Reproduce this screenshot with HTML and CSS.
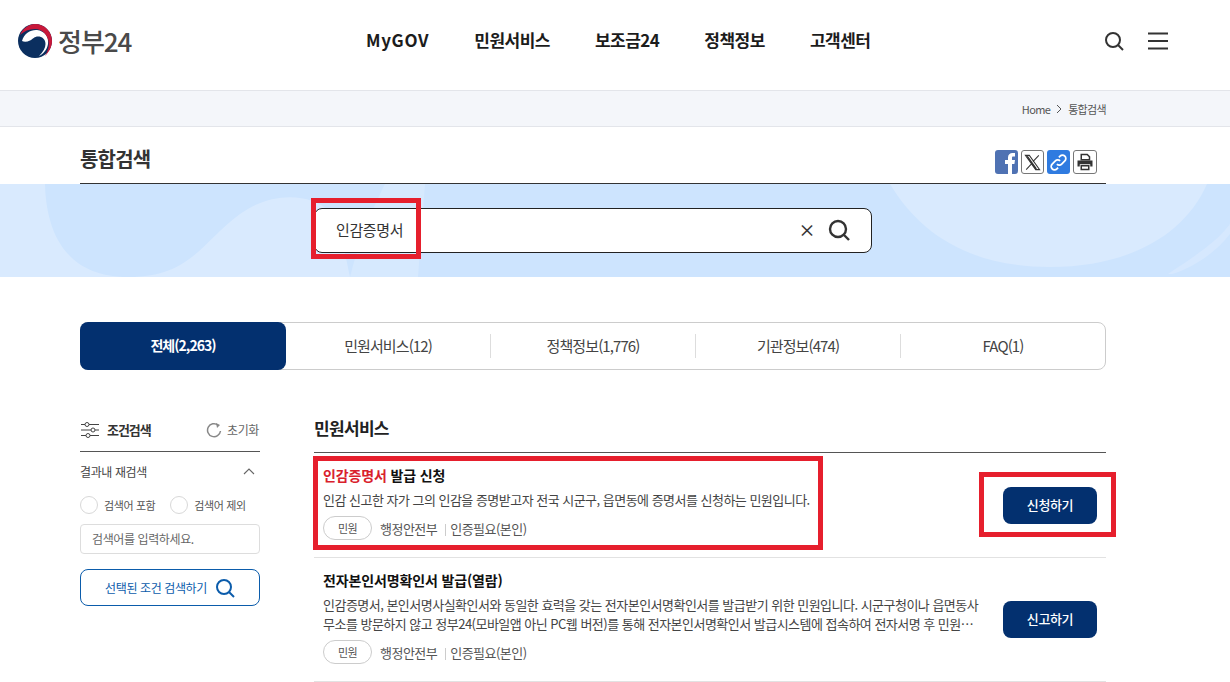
FILE: index.html
```html
<!DOCTYPE html>
<html lang="ko">
<head>
<meta charset="utf-8">
<title>통합검색 | 정부24</title>
<link rel="stylesheet" href="styles.css">
</head>
<body>
<header class="site-header">
  <a class="logo">
    <svg class="logo-mark" viewBox="0 0 36 36" width="36" height="36">
      <circle cx="18" cy="18" r="17" fill="#0b2f5f"/>
      <path d="M5 18C7 10 14 6.500 20 7C28 8 32 14 31 21C30 27 26 31 22 33C26 29 28.500 25 28.500 21C28.500 16 25 13.500 21 13.500C17.500 13.500 16 16 13 17.500C10 19 7 19 5 18Z" fill="#fff"/>
      <path d="M3 12C6 5 12 1 18 1C28 1 35 9 35 18C35 24 32 29 28 33C31 28 32.500 23 31.500 18C30 11 25 6 18 6C12 6 7 8 3 12Z" fill="#c8183a"/>
    </svg>
    <span class="logo-text">정부24</span>
  </a>
  <nav class="main-nav">
    <a class="nav-latin">MyGOV</a><a>민원서비스</a><a>보조금24</a><a>정책정보</a><a>고객센터</a>
  </nav>
  <div class="header-tools">
    <svg viewBox="0 0 20 20" width="20" height="20"><circle cx="9" cy="9" r="7" class="stroke-dark"/><path d="M14 14l5 5" class="stroke-dark"/></svg>
    <svg viewBox="0 0 20 18" width="20" height="18"><path d="M0 1.500h20M0 9h20M0 16.500h20" class="stroke-dark"/></svg>
  </div>
</header>
<div class="breadcrumb">
  <div class="container crumbs">
    <span>Home</span>
    <svg viewBox="0 0 6 10" width="6" height="10"><path d="M1 1l4 4-4 4" fill="none" stroke="#555" stroke-width="1"/></svg>
    <span>통합검색</span>
  </div>
</div>
<div class="container title-row">
  <h1>통합검색</h1>
  <div class="share">
    <span class="share-btn fb"><svg viewBox="0 0 23 24" width="23" height="24"><path d="M13 24V14h-3v-4h3V7.500C13 4.500 15 3 17.500 3H20v3.500h-1.800C17 6.500 17 7.200 17 8v2h3l-.6 4H17v10z" fill="#fff"/></svg></span>
    <span class="share-btn outline"><svg viewBox="0 0 24 24" width="19" height="19"><path d="M3 3h5l13 18h-5zM20 3l-7.500 8M11 13.500L4 21M5.500 4L17 20" fill="none" stroke="#333" stroke-width="1.300"/></svg></span>
    <span class="share-btn link"><svg viewBox="0 0 24 24" width="19" height="19"><path d="M10 14a4 4 0 0 0 6 0l4-4a4 4 0 0 0-6-6l-1.500 1.500M14 10a4 4 0 0 0-6 0l-4 4a4 4 0 0 0 6 6l1.500-1.500" fill="none" stroke="#fff" stroke-width="2.200"/></svg></span>
    <span class="share-btn outline"><svg viewBox="0 0 24 24" width="18" height="18"><path d="M7 2h8l3 3v4H7z" fill="none" stroke="#333" stroke-width="2"/><path d="M2 10h20v8h-3v-3H5v3H2z" fill="#333"/><path d="M7 17h10v5H7z" fill="none" stroke="#333" stroke-width="2"/></svg></span>
  </div>
</div>
<section class="search-band">
  <svg class="band-art" viewBox="0 0 1230 93" preserveAspectRatio="none">
    <path d="M0 0H45C46 40 60 93 128 93H350C345 70 340 40 330 28C310 8 270 8 240 30C200 60 190 93 128 93H0Z" fill="#d9eafe"/>
    <path d="M385 0H425L418 93H350C358 60 372 25 385 0Z" fill="#d6e9fe"/>
    <path d="M890 0C920 50 970 83 1050 83C1130 83 1185 50 1207 0Z" fill="#d9eafe"/>
    <path d="M1168 90C1190 75 1215 60 1230 40V50C1215 70 1190 85 1172 90Z" fill="#d6e8fe"/>
  </svg>
  <div class="search-box">
    <span class="search-value">인감증명서</span>
    <span class="search-clear">×</span>
    <svg viewBox="0 0 24 24" width="24" height="24"><circle cx="11" cy="11" r="8" class="stroke-dark wide"/><path d="M17 17l5 5" class="stroke-dark wide"/></svg>
  </div>
  <span class="mark mark-search"></span>
</section>
<div class="container">
  <div class="tabs">
    <a class="tab active">전체(2,263)</a>
    <a class="tab">민원서비스(12)</a>
    <a class="tab sep">정책정보(1,776)</a>
    <a class="tab sep">기관정보(474)</a>
    <a class="tab sep">FAQ(1)</a>
  </div>
  <div class="columns">
    <aside class="filters">
      <div class="filter-head">
        <svg viewBox="0 0 18 16" width="18" height="16"><path d="M0 2.500h18M0 8h18M0 13.500h18" stroke="#444" stroke-width="1.200"/><circle cx="6" cy="2.500" r="2" fill="#fff" stroke="#444"/><circle cx="12" cy="8" r="2" fill="#fff" stroke="#444"/><circle cx="7" cy="13.500" r="2" fill="#fff" stroke="#444"/></svg>
        <strong>조건검색</strong>
        <span class="reset">
          <svg viewBox="0 0 16 16" width="16" height="16"><path d="M14.500 9A6.500 6.500 0 1 1 12 3" fill="none" stroke="#888" stroke-width="1.500"/><path d="M10 1l4 2-3 3z" fill="#888"/></svg>
          초기화
        </span>
      </div>
      <div class="filter-sub">
        <span>결과내 재검색</span>
        <svg viewBox="0 0 12 7" width="12" height="7"><path d="M1 6l5-5 5 5" fill="none" stroke="#666" stroke-width="1.100"/></svg>
      </div>
      <div class="radios">
        <label class="radio"><i></i>검색어 포함</label>
        <label class="radio"><i></i>검색어 제외</label>
      </div>
      <div class="filter-input">검색어를 입력하세요.</div>
      <a class="filter-submit">선택된 조건 검색하기
        <svg viewBox="0 0 20 20" width="20" height="20"><circle cx="9" cy="9" r="7" fill="none" stroke="#0b5cab" stroke-width="2"/><path d="M14 14l5 5" stroke="#0b5cab" stroke-width="2"/></svg>
      </a>
    </aside>
    <main class="results">
      <h2>민원서비스</h2>
      <article class="item">
        <div class="item-body">
          <h3><em>인감증명서</em> 발급 신청</h3>
          <p>인감 신고한 자가 그의 인감을 증명받고자 전국 시군구, 읍면동에 증명서를 신청하는 민원입니다.</p>
          <div class="meta"><span class="pill">민원</span><span>행정안전부</span><span class="auth">인증필요(본인)</span></div>
        </div>
        <a class="apply">신청하기</a>
        <span class="mark mark-item"></span>
        <span class="mark mark-button"></span>
      </article>
      <article class="item">
        <div class="item-body">
          <h3>전자본인서명확인서 발급(열람)</h3>
          <p>인감증명서, 본인서명사실확인서와 동일한 효력을 갖는 전자본인서명확인서를 발급받기 위한 민원입니다. 시군구청이나 읍면동사무소를 방문하지 않고 정부24(모바일앱 아닌 PC웹 버전)를 통해 전자본인서명확인서 발급시스템에 접속하여 전자서명 후 민원…</p>
          <div class="meta"><span class="pill">민원</span><span>행정안전부</span><span class="auth">인증필요(본인)</span></div>
        </div>
        <a class="apply">신고하기</a>
      </article>
    </main>
  </div>
</div>
</body>
</html>
```
FILE: styles.css
```css
* { box-sizing: border-box; }
html, body { margin: 0; padding: 0; }
body {
  background: #fff;
  color: #222;
  font-family: "Noto Sans CJK KR", "Noto Sans", sans-serif;
  font-size: 13px;
  letter-spacing: -0.03em;
}
h1, h2, h3, p { margin: 0; }
em { font-style: normal; color: #d9212c; }
.container { width: 1026px; margin-left: 80px; }
.stroke-dark { fill: none; stroke: #333; stroke-width: 2; }
.stroke-dark.wide { stroke-width: 2.4; }

.site-header {
  height: 91px;
  display: flex;
  align-items: center;
  padding: 0 62px 8px 17px;
  border-bottom: 1px solid #e3e5ea;
}
.logo { display: flex; align-items: center; gap: 5px; width: 116px; }
.logo-mark { flex: none; }
.logo-text { font-size: 26px; line-height: 36px; color: #4a4a4a; letter-spacing: -0.04em; font-weight: 500; white-space: nowrap; }
.main-nav { display: flex; gap: 45px; margin: 0 0 3px 233px; font-size: 17px; font-weight: 700; color: #1c1c1c; letter-spacing: -0.03em; }
.main-nav .nav-latin { letter-spacing: 0.04em; }
.header-tools { margin-left: auto; display: flex; align-items: center; gap: 24px; }

.breadcrumb { height: 36px; background: #f4f6fa; border-bottom: 1px solid #e3e5ea; }
.crumbs { height: 35px; display: flex; align-items: center; justify-content: flex-end; gap: 6px; font-size: 11px; color: #555; letter-spacing: -0.06em; }

.title-row {
  height: 57px;
  display: flex;
  align-items: flex-start;
  justify-content: space-between;
  border-bottom: 1px solid #333;
  padding: 16px 9px 0 0;
}
.title-row h1 { font-size: 20px; line-height: 32px; font-weight: 700; color: #333; letter-spacing: -0.04em; }
.share { display: flex; gap: 3px; margin-top: 7px; }
.share-btn { width: 23px; height: 24px; border-radius: 3px; display: flex; align-items: center; justify-content: center; overflow: hidden; }
.share-btn:last-child { width: 24px; }
.share-btn.fb { background: #4f72b3; }
.share-btn.link { background: #2f7be0; }
.share-btn.outline { border: 1px solid #777; background: #fff; }

.search-band {
  position: relative;
  height: 93px;
  background: #cde4fe;
  display: flex;
  padding: 24px 0 0 314px;
}
.band-art { position: absolute; inset: 0; width: 100%; height: 100%; }
.search-box {
  position: relative;
  width: 558px;
  height: 45px;
  background: #fff;
  border: 1px solid #222;
  border-radius: 8px;
  display: flex;
  align-items: center;
  padding: 0 20px 2px 21px;
}
.search-value { font-size: 15px; color: #333; flex: 1; }
.search-clear { font-size: 17px; color: #333; margin-right: 12px; line-height: 1; font-weight: 500; }

.mark { position: absolute; border: 5px solid #e61f2d; pointer-events: none; }
.mark-search { left: 311px; top: 14px; width: 110px; height: 61px; }
.mark-item { left: -1px; top: 3px; width: 510px; height: 94px; }
.mark-button { left: 665px; top: 19px; width: 137px; height: 65px; }

.tabs {
  margin-top: 45px;
  height: 48px;
  border: 1px solid #ccc;
  border-radius: 8px;
  display: flex;
  align-items: center;
}
.tab { flex: 1; text-align: center; font-size: 15px; color: #444; letter-spacing: -0.06em; height: 24px; line-height: 24px; }
.tab.sep { border-left: 1px solid #ddd; }
.tab.active {
  flex: none;
  width: 206px;
  height: 48px;
  line-height: 46px;
  margin: -1px 0 -1px -1px;
  background: #03306f;
  color: #fff;
  font-size: 14px;
  font-weight: 700;
  letter-spacing: -0.07em;
  border-radius: 8px;
}

.columns { display: flex; gap: 54px; margin-top: 38px; }
.filters { width: 180px; flex: none; padding-top: 10px; }
.filter-head {
  height: 34px;
  display: flex;
  align-items: center;
  gap: 8px;
  padding: 0 1px 10px 1px;
  border-bottom: 1px solid #555;
  font-size: 13px;
}
.filter-head strong { color: #333; letter-spacing: -0.08em; }
.reset { margin-left: auto; display: flex; align-items: center; gap: 5px; font-size: 12px; color: #666; }
.filter-sub { height: 39px; display: flex; align-items: center; justify-content: space-between; padding-right: 5px; font-size: 12px; color: #444; }
.radios { display: flex; gap: 15px; margin-top: 5px; height: 18px; }
.radio { display: flex; align-items: center; gap: 6px; font-size: 11px; color: #555; white-space: nowrap; }
.radio i { width: 18px; height: 18px; border: 1px solid #d8d8d8; border-radius: 50%; flex: none; }
.filter-input { margin-top: 10px; height: 30px; border: 1px solid #ddd; border-radius: 4px; padding-left: 11px; line-height: 27px; font-size: 12px; color: #666; }
.filter-submit {
  margin-top: 15px;
  height: 37px;
  border: 1px solid #0b5cab;
  border-radius: 8px;
  color: #0b5cab;
  font-size: 12px;
  display: flex;
  align-items: center;
  justify-content: center;
  gap: 8px;
}

.results { flex: 1; min-width: 0; }
.results h2 { height: 45px; font-size: 17px; line-height: 40px; font-weight: 700; color: #222; border-bottom: 1px solid #555; letter-spacing: -0.04em; }
.item {
  position: relative;
  display: flex;
  align-items: center;
  justify-content: space-between;
  padding: 12px 9px 17px;
  border-bottom: 1px solid #e2e2e2;
}
.item-body { width: 662px; }
.item h3 { font-size: 14px; line-height: 20px; font-weight: 700; color: #111; letter-spacing: -0.01em; }
.item p {
  margin-top: 5px;
  font-size: 13px;
  line-height: 19px;
  color: #444;
  letter-spacing: -0.04em;
  word-break: break-all;
}
.meta { margin-top: 7px; height: 24px; display: flex; align-items: center; font-size: 13px; color: #555; letter-spacing: -0.04em; }
.pill { width: 49px; height: 24px; border: 1px solid #ccc; border-radius: 12px; text-align: center; line-height: 22px; font-size: 11px; margin-right: 8px; }
.auth { margin-left: 8px; padding-left: 5px; position: relative; }
.auth::before { content: ""; position: absolute; left: 0; top: 5px; height: 12px; border-left: 1px solid #ccc; }
.apply {
  width: 94px;
  height: 37px;
  margin-top: 5px;
  background: #03306f;
  color: #fff;
  border-radius: 8px;
  text-align: center;
  line-height: 36px;
  font-size: 13px;
  font-weight: 500;
  flex: none;
}
```
